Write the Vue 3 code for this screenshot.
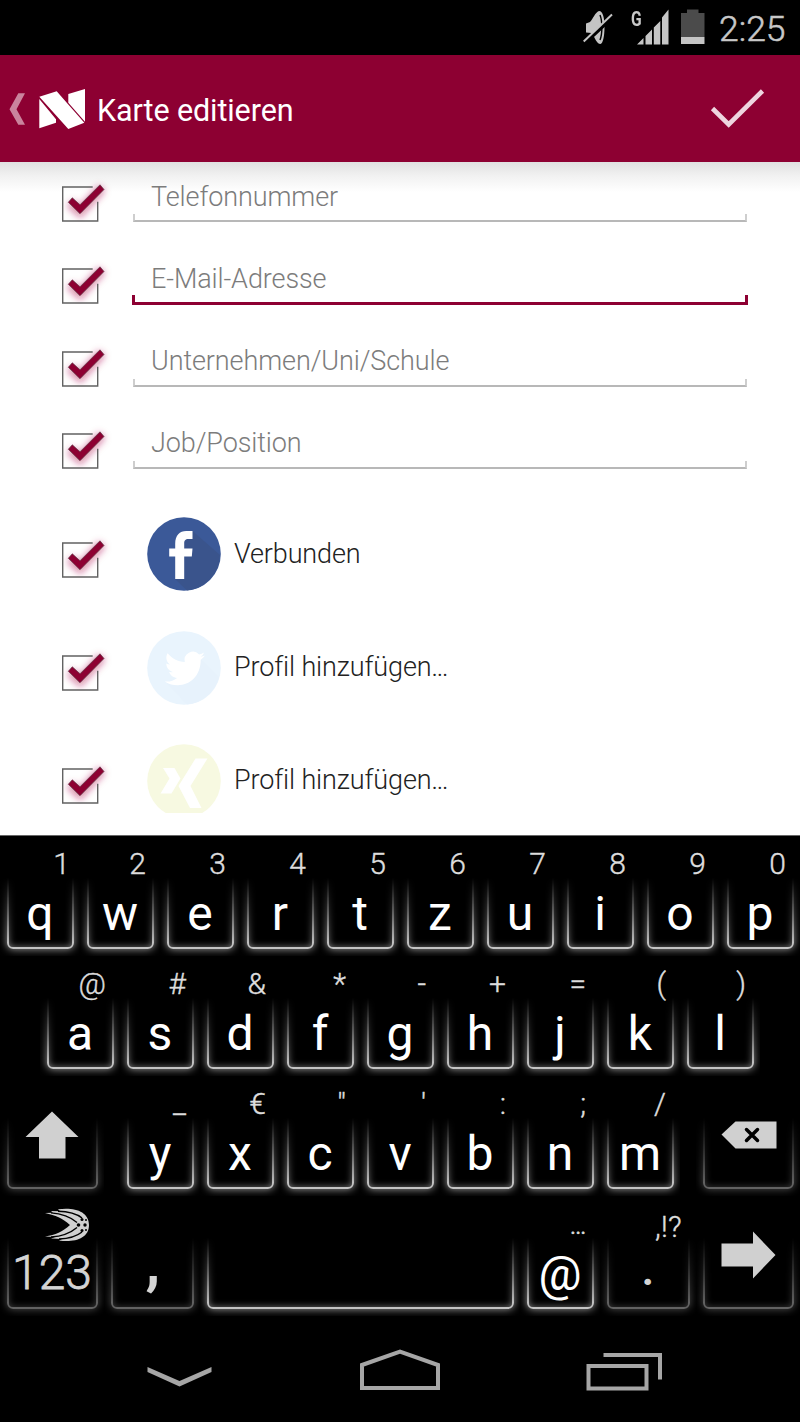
<script setup>
const fields = [
  { label: 'Telefonnummer', focus: false },
  { label: 'E-Mail-Adresse', focus: true },
  { label: 'Unternehmen/Uni/Schule', focus: false },
  { label: 'Job/Position', focus: false },
]
const socials = [
  { icon: 'facebook', label: 'Verbunden', tail: '' },
  { icon: 'twitter', label: 'Profil hinzufügen', tail: '...' },
  { icon: 'xing', label: 'Profil hinzufügen', tail: '...' },
]
const toKeys = (letters, hints) => letters.split('').map((c, i) => ({ label: c, hint: hints[i] }))
const rows = [
  toKeys('qwertzuiop', '1234567890'),
  toKeys('asdfghjkl', '@#&*-+=()'),
  [{ icon: 'shift', kind: 'side left' }, ...toKeys('yxcvbnm', '_€"\':;/'), { icon: 'delete', kind: 'side right' }],
  [
    { label: '123', icon: 'swift', kind: 'side number' },
    { label: ',', kind: 'mid comma' },
    { label: '', kind: 'space' },
    { label: '@', hint: '...', kind: 'at' },
    { label: '.', hint: ',!?', kind: 'mid dot' },
    { icon: 'enter', kind: 'side' },
  ],
]
rows[0][0].kind = 'one'
</script>

<template>
  <div class="screen">
    <header class="status">
      <svg class="mute" width="30" height="36" viewBox="0 0 30 36">
        <path d="M3 14.500l4-1.500C10 10 12 3.500 16 2c4 0 5.500 7 5.500 16S20 34.500 17.500 35c-4 0-5-6-9-11L3 23.500z" fill="#c4c4c4" />
        <path d="M17 6c2.500 6 2.500 19 0 25" fill="none" stroke="#000" stroke-width="1.400" />
        <path d="M0 35.500L30 7.500" stroke="#000" stroke-width="4" />
        <path d="M.7 32.500L29 5.500" stroke="#c4c4c4" stroke-width="2" />
      </svg>
      <span class="network">G</span>
      <svg class="signal" width="32" height="36" viewBox="0 0 32 36">
        <path d="M0 35.500L6.500 29v6.500zM8.500 27L15 20.500v15H8.500zM16.800 18.500l6.500-6.500v23.500h-6.500zM25 8.500l6.500-8v35H25z" fill="#c6c6c6" />
      </svg>
      <svg class="battery" width="24" height="36" viewBox="0 0 24 36">
        <path d="M0 4H6V.5h11.500V4h6v24H0z" fill="#4b4b4b" />
        <path d="M0 28h23.500v7H0z" fill="#c4c4c4" />
      </svg>
      <span class="clock">2:25</span>
    </header>

    <div class="bar">
      <svg class="back" width="18" height="34" viewBox="0 0 18 34">
        <path d="M9.300 1.300H16L7.500 17.200l8.500 15.500H9.300L.5 17.200z" fill="#ca849d" />
      </svg>
      <svg class="logo" width="48" height="42" viewBox="0 0 48 42">
        <path d="M1.300 7.700L18.700 2.300 46.300 33.700 30.300 40zM30.300 5L47 0v32.700L30.300 13.700zM1.300 10L18 30.300v3.400L1.300 39.300z" fill="#fff" />
      </svg>
      <h1>Karte editieren</h1>
      <svg class="done" width="56" height="42" viewBox="0 0 56 42">
        <path d="M2.500 20.500L18.700 36.500 52.500 3" fill="none" stroke="#eed5df" stroke-width="4.600" />
      </svg>
    </div>

    <main>
      <div class="shade"></div>
      <div class="content">
        <div v-for="f in fields" :key="f.label" class="field-row">
          <svg class="check" width="64" height="56" viewBox="0 0 64 56">
            <use href="#checkmark" />
          </svg>
          <div class="field" :class="{ focus: f.focus }">
            <span>{{ f.label }}</span>
            <i></i>
          </div>
        </div>
        <div v-for="s in socials" :key="s.icon" class="social-row">
          <svg class="check" width="64" height="56" viewBox="0 0 64 56">
            <use href="#checkmark" />
          </svg>
          <svg class="brand" width="74" height="74" viewBox="0 0 74 74">
            <template v-if="s.icon === 'facebook'">
              <circle cx="37" cy="37" r="36.800" fill="#3b5998" />
              <path d="M45.500 14L73 38A36.800 36.800 0 0 1 40 73.600L28 62V28z" fill="#3a548c" />
              <path d="M28.200 62V39.500h-6v-8h6V27c0-9 4.500-13 11-13H45.500v8h-4c-3.300 0-4.300 1.500-4.300 4.500v5h8.300l-.7 8h-7.600V62z" fill="#fff" />
            </template>
            <template v-else-if="s.icon === 'twitter'">
              <circle cx="37" cy="37" r="36.800" fill="#e9f4fd" />
              <path d="M19 51l17-2 18-20 18 17A36.800 36.800 0 0 1 40 73.600z" fill="#e7f2fc" />
              <path d="M58 24.500c-1.500.7-2.700 1-4.300 1.200 1.600-1 2.700-2.400 3.300-4.200-1.500.9-3 1.500-4.900 1.900a8.400 8.400 0 0 0-14.300 7.700c-7-.4-13-3.700-17.200-8.800-2.500 4.300-1 8.900 2.500 11.300-1.400 0-2.700-.4-3.800-1 0 4.200 2.800 7.500 6.700 8.400-1.200.3-2.500.3-3.800.1 1.100 3.400 4.100 5.700 7.900 5.800-3.500 2.800-7.800 4-12.400 3.500 14.500 9.300 36 1.700 36-21.600 1.700-1.200 3.100-2.600 4.300-4.300z" fill="#fff" />
            </template>
            <template v-else>
              <circle cx="37" cy="37" r="36.800" fill="#f7f9e1" />
              <path d="M16 24h11.500l6 10.500L24.500 49.500H13.500L22.500 34.500zM48.500 14.500H60.500L43.500 42l11 22H43L31.500 42z" fill="#fff" />
            </template>
          </svg>
          <span class="social-label">{{ s.label }}<span class="tail">{{ s.tail }}</span></span>
        </div>
      </div>
    </main>

    <section class="keyboard">
      <div v-for="(row, r) in rows" :key="r" class="keys">
        <div v-for="(k, i) in row" :key="i" class="key" :class="k.kind">
          <div class="frame"></div>
          <span v-if="k.hint" class="hint">{{ k.hint }}</span>
          <svg v-if="k.icon === 'shift'" class="glyph-shift" width="54" height="48" viewBox="0 0 54 48">
            <path d="M27 .5L53.500 26H40.500v21.500H14V26H.5z" fill="#d0d0d0" />
          </svg>
          <svg v-if="k.icon === 'delete'" class="glyph-delete" width="56" height="28" viewBox="0 0 56 28">
            <path d="M.5 13.500L14.500.5h41v27h-41z" fill="#d0d0d0" />
            <path d="M25.500 8.500l11 11M36.500 8.500l-11 11" stroke="#000" stroke-width="3.500" stroke-linecap="round" />
          </svg>
          <svg v-if="k.icon === 'enter'" class="glyph-enter" width="56" height="48" viewBox="0 0 56 48">
            <path d="M.5 12.500H32V.5L54.500 24 32 47.500v-12H.5z" fill="#d0d0d0" />
          </svg>
          <svg v-if="k.icon === 'swift'" class="glyph-swift" width="46" height="34" viewBox="0 0 46 34">
            <path d="M1 5L9 4.800 7 3 16 3.300 14 1.200C30-1 45 3 45 17S30 34.500 15 32.500L18 31 7 30.500 11 29 1 28.500C12 27 18 24 26 17 18 10 12 7.500 1 5z" fill="#d0d0d0" />
            <path d="M7 4.900Q23 6 33 14.500M14 3.200Q30 3.500 38 10M7 29Q23 28 33 19.500M15 31Q30 30.500 38 24" fill="none" stroke="#000" stroke-width="1.400" />
            <g fill="#000">
              <circle cx="34.500" cy="17" r="1.800" /><circle cx="41" cy="17" r="1.700" />
              <circle cx="38" cy="11.500" r="1.500" /><circle cx="38" cy="22.500" r="1.500" />
              <circle cx="42" cy="12" r="1" /><circle cx="42" cy="22" r="1" />
            </g>
          </svg>
          <span v-if="k.label" class="label">{{ k.label }}</span>
        </div>
      </div>
    </section>

    <nav>
      <svg width="66" height="22" viewBox="0 0 66 22">
        <path d="M1.500 1v5L33.500 20.500 65.500 6V1L33.500 15z" fill="#a6a6a6" />
      </svg>
      <svg width="82" height="44" viewBox="0 0 82 44">
        <path d="M3 17L41 3.500 79 17V40H3z" fill="none" stroke="#a6a6a6" stroke-width="4" />
      </svg>
      <svg width="78" height="40" viewBox="0 0 78 40">
        <path d="M3.500 15h58v22.500h-58zM18.500 4H75V28.500" fill="none" stroke="#a6a6a6" stroke-width="4" />
      </svg>
    </nav>

    <svg class="defs" width="0" height="0">
      <defs>
        <filter id="soft" x="-40%" y="-40%" width="180%" height="180%">
          <feGaussianBlur stdDeviation="3.500" />
        </filter>
        <g id="checkmark">
          <path d="M14 25L24 34 46 10" fill="none" stroke="#b01850" stroke-opacity=".5" stroke-width="9" filter="url(#soft)" />
          <path d="M36.700 9H6.700v34h35V23.700" fill="none" stroke="#626262" stroke-width="1.400" />
          <path d="M12.300 24.300l4-4.500 7.700 7L44 6.800l4 4.700L24 35.700z" fill="#8d0032" stroke="#5f3b48" stroke-width=".7" />
        </g>
      </defs>
    </svg>
  </div>
</template>

<style>
body { margin: 0; background: #000; }
</style>

<style scoped>
.screen {
  position: relative;
  width: 800px;
  height: 1422px;
  overflow: hidden;
  background: #000;
  font-family: Roboto, "Noto Sans", sans-serif;
  display: flex;
  flex-direction: column;
}
svg { display: block; flex: none; }
.defs { position: absolute; }
.status {
  height: 55px;
  flex: none;
  display: flex;
  align-items: flex-start;
  padding-left: 583px;
  color: #c8c8c8;
}
.mute, .signal, .battery { margin-top: 9px; }
.network { width: 12px; margin: 8px 0 0 18px; font-size: 20px; line-height: 22px; font-weight: 700; transform: scaleX(.78); transform-origin: left; }
.signal { margin-left: -6px; }
.battery { margin-left: 12px; }
.clock { margin: 9px 0 0 14px; font-size: 35.500px; line-height: 41px; font-weight: 300; -webkit-text-stroke: .5px #c8c8c8; white-space: nowrap; }
.bar {
  height: 107px;
  flex: none;
  display: flex;
  background: #8d0032;
}
.back { margin: 37px 0 0 9px; }
.logo { margin: 34px 0 0 11px; }
h1 { margin: 35px 0 0 11px; font-size: 30.500px; line-height: 42px; font-weight: 400; letter-spacing: -.1px; color: #fff; white-space: nowrap; }
.done { margin: 33px 34px 0 auto; }
main {
  position: relative;
  height: 673px;
  flex: none;
  background: #fff;
}
.shade { position: absolute; inset: 0 0 auto; height: 30px; background: linear-gradient(#e0e0e0, #f1f1f1 45%, #fff); }
.content { position: relative; box-sizing: border-box; height: 651px; padding: 16px 0 0 56px; overflow: hidden; }
.field-row { display: flex; height: 82.25px; }
.field { position: relative; width: 614px; height: 44px; margin-left: 13px; }
.field span { display: block; padding: .5px 0 0 18px; font-size: 27px; line-height: 36px; font-weight: 300; letter-spacing: -.1px; color: #7c7c7c; white-space: nowrap; }
.field i { position: absolute; inset: auto 0 0; height: 6px; border: solid #cecece; border-width: 0 2px 2px; border-bottom-color: #b8b8b8; }
.field.focus i { inset: auto -1px -1px; height: 7px; border: solid #8d0032; border-width: 0 3px 3px; }
.social-row { display: flex; height: 113.3px; }
.social-row .check { margin-top: 26.500px; }
.brand { margin: 10.300px 0 0 27px; }
.social-label { margin: 28.500px 0 0 13px; font-size: 27px; line-height: 36px; font-weight: 300; letter-spacing: -.12px; color: #222; white-space: nowrap; }
.tail { letter-spacing: -1.200px; }
.keyboard { box-sizing: border-box; height: 481px; flex: none; border-top: 1px solid #666; }
.keys { height: 120px; display: flex; justify-content: center; }
.key {
  position: relative;
  box-sizing: border-box;
  width: 80px;
  height: 120px;
  padding-top: 8px;
  color: #fff;
  text-align: center;
}
.hint { display: block; height: 40px; padding-right: 14px; text-align: right; font-size: 30px; line-height: 40px; font-weight: 300; -webkit-text-stroke: .4px #ddd; color: #ddd; }
.one .hint { padding-right: 10px; }
.label { position: absolute; inset: 49px 0 auto; font-size: 48px; line-height: 58px; }
.frame {
  position: absolute;
  inset: 42px 0 0;
  -webkit-mask-image: linear-gradient(transparent, rgba(0, 0, 0, .5) 45%, #000 85%);
  mask-image: linear-gradient(transparent, rgba(0, 0, 0, .5) 45%, #000 85%);
}
.frame::before {
  content: "";
  position: absolute;
  inset: -12px 6px 7px 7px;
  border: 2px solid #c4c4c4;
  border-radius: 6px;
  box-shadow: 0 0 8px rgba(255, 255, 255, .65), inset 0 0 7px rgba(255, 255, 255, .45);
}
.side { width: 104px; }
.side.left { margin-right: 16px; }
.side.right { margin-left: 16px; }
.mid { width: 96px; }
.space { width: 320px; }
.side .frame, .mid .frame { opacity: .5; }
.side .label, .mid .label { color: #d4d4d4; }
.number .label { font-weight: 300; -webkit-text-stroke: .8px #d4d4d4; top: 48px; }
.comma .label { font-size: 60px; font-weight: 700; top: 38px; left: 2px; }
.dot .label { top: 44px; font-weight: 500; }
.at .hint { padding-right: 15px; letter-spacing: -2px; }
.mid .hint { padding: 3px 14px 0 0; letter-spacing: .3px; }
.glyph-shift { margin: 27px 0 0 25px; }
.glyph-delete { margin: 37px 0 0 25px; }
.glyph-enter { margin: 27px 0 0 25px; }
.glyph-swift { margin: 4px 0 0 44px; }
nav { height: 106px; display: flex; align-items: flex-start; }
nav svg:nth-child(1) { margin: 50px 0 0 146px; }
nav svg:nth-child(2) { margin: 32px 0 0 147px; }
nav svg:nth-child(3) { margin: 35px 0 0 144px; }
</style>
